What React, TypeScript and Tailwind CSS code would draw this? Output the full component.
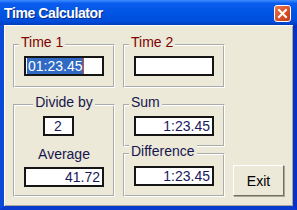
import React from "react";

const font = "font-['Liberation_Sans',Arial,sans-serif]";

export default function App() {
  return (
    <div className={`flex h-[210px] w-[297px] flex-col overflow-hidden bg-[#0a4ddf] ${font}`}>
      <TitleBar />
      <div className="flex flex-1 border-x-[4px] border-b-[4px] border-l-[#0b4ad8] border-r-[#0733c4] border-b-[#0a3bcc]">
        <div className="flex-1 bg-[#ece9d8] pl-[9px] pt-[19px] shadow-[inset_1px_1px_0_#fffdf6,inset_-1px_-1px_0_#aca899]">
          <div className="grid grid-cols-[102px_102px_51px] grid-rows-[44px_93px] gap-x-[8px] gap-y-[16px]">
            <GroupBox caption="Time 1" maroon>
              <div className="pl-[9px] pt-[10px]">
                <TextBox value="01:23.45" selected />
              </div>
            </GroupBox>
            <GroupBox caption="Time 2" maroon>
              <div className="pl-[9px] pt-[10px]">
                <TextBox value="" />
              </div>
            </GroupBox>
            <div />

            <GroupBox caption="Divide by" centered>
              <div className="flex flex-col pt-[10px]">
                <div className="ml-[28px] w-[31px]">
                  <TextBox value="2" center />
                </div>
                <span className="mt-[10px] text-center text-[14px] leading-[16px] text-[#16164f]">
                  Average
                </span>
                <div className="ml-[9px] mt-[5px]">
                  <TextBox value="41.72" right />
                </div>
              </div>
            </GroupBox>
            <div className="flex flex-col gap-[6px]">
              <GroupBox caption="Sum" className="h-[43px]">
                <div className="pl-[9px] pt-[10px]">
                  <TextBox value="1:23.45" right />
                </div>
              </GroupBox>
              <GroupBox caption="Difference" className="h-[44px]">
                <div className="pl-[9px] pt-[11px]">
                  <TextBox value="1:23.45" right />
                </div>
              </GroupBox>
            </div>
            <div className="flex items-end pb-[1px]">
              <button
                type="button"
                className="h-[31px] w-[51px] border border-t-white border-l-white border-r-[#716f64] border-b-[#716f64] bg-[#ece9d8] text-[14px] leading-[16px] text-black shadow-[1px_1px_0_#aca899]"
              >
                Exit
              </button>
            </div>
          </div>
        </div>
      </div>
    </div>
  );
}

function TitleBar() {
  return (
    <div className="flex h-[25px] shrink-0 items-center justify-between bg-[linear-gradient(to_bottom,#3d8bff_0%,#0a5ced_14%,#0055e5_50%,#004ddb_85%,#003dbd_100%)] pl-[4px] pr-[6px]">
      <span className="text-[14px] font-bold leading-[16px] tracking-[-0.4px] text-white [text-shadow:1px_1px_0_#0a2a8a]">
        Time Calculator
      </span>
      <svg width="17" height="17" viewBox="0 0 17 17" className="mt-[1px]">
        <defs>
          <linearGradient id="cl" x1="0" y1="0" x2="1" y2="1">
            <stop offset="0" stopColor="#ee7a50" />
            <stop offset="0.5" stopColor="#dc5228" />
            <stop offset="1" stopColor="#c23a12" />
          </linearGradient>
        </defs>
        <rect x="0.5" y="0.5" width="16" height="16" rx="2.5" fill="url(#cl)" stroke="#fff" />
        <path d="M5 5 L12 12 M12 5 L5 12" stroke="#fff" strokeWidth="2" strokeLinecap="square" />
      </svg>
    </div>
  );
}

function GroupBox({
  caption,
  maroon,
  centered,
  className = "",
  children,
}: {
  caption: string;
  maroon?: boolean;
  centered?: boolean;
  className?: string;
  children: React.ReactNode;
}) {
  const color = maroon ? "text-[#800000]" : "text-[#16164f]";
  return (
    <div className={`relative border-2 border-white [border-style:groove] ${className}`}>
      {centered ? (
        <div className="absolute -top-[12px] left-0 right-0 flex justify-center">
          <span className={`bg-[#ece9d8] px-[2px] text-[14px] leading-[16px] ${color}`}>{caption}</span>
        </div>
      ) : (
        <span
          className={`absolute -top-[12px] left-[4px] bg-[#ece9d8] px-[2px] text-[14px] leading-[16px] ${color}`}
        >
          {caption}
        </span>
      )}
      {children}
    </div>
  );
}

function TextBox({
  value,
  right,
  center,
  selected,
}: {
  value: string;
  right?: boolean;
  center?: boolean;
  selected?: boolean;
}) {
  const align = right ? "justify-end" : center ? "justify-center" : "justify-start";
  return (
    <div
      className={`flex h-[20px] w-full max-w-[80px] items-center border-2 border-[#151515] bg-white px-[1px] text-[14px] leading-[16px] text-[#1a1a5e] ${align} ${
        center ? "" : "w-[80px]"
      }`}
    >
      {selected ? (
        <>
          <span className="bg-[#316ac5] pl-[1px] text-white">{value}</span>
          <span className="h-[16px] w-[1px] bg-[#d2501c]" />
        </>
      ) : (
        <span className="pr-[1px]">{value}</span>
      )}
    </div>
  );
}
